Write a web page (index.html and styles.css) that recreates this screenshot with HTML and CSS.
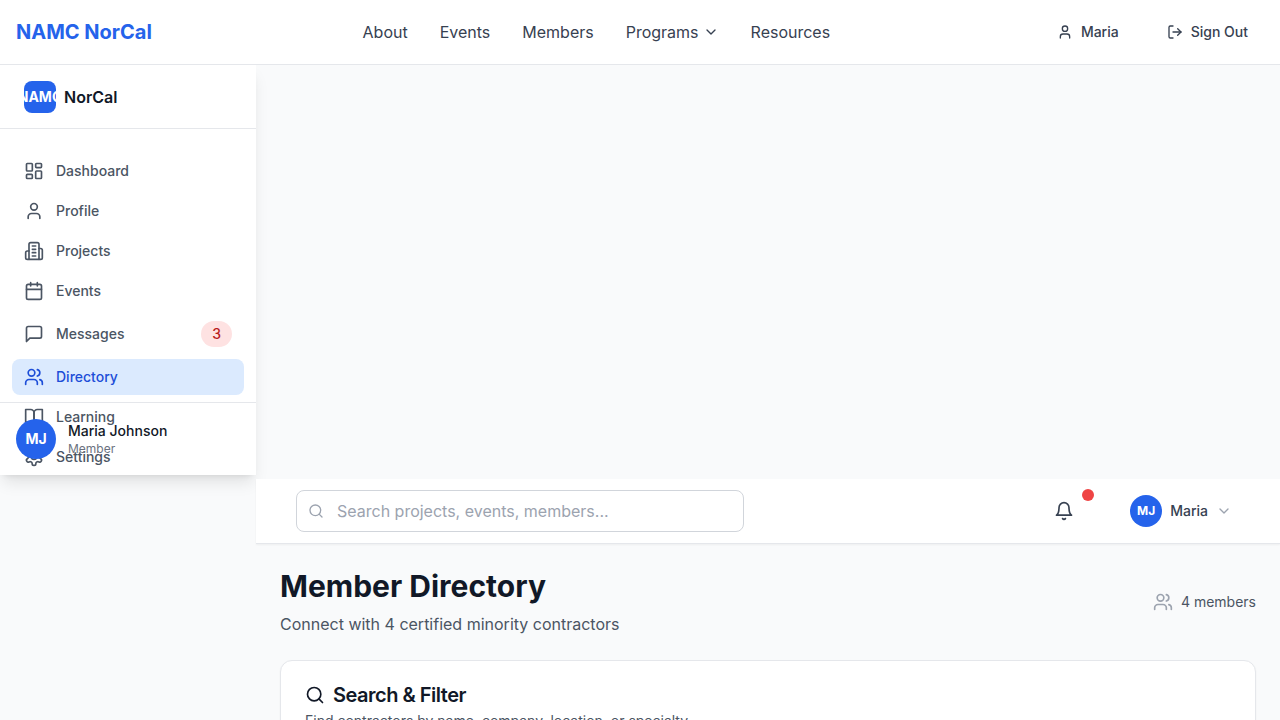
FILE: index.html
```html
<!DOCTYPE html>
<html lang="en">
<head>
<meta charset="utf-8">
<title>Member Directory</title>
<link rel="stylesheet" href="styles.css">
</head>
<body>
<svg class="sprite" xmlns="http://www.w3.org/2000/svg">
  <symbol id="user" viewBox="0 0 24 24"><path d="M19 21v-2a4 4 0 0 0-4-4H9a4 4 0 0 0-4 4v2"/><circle cx="12" cy="7" r="4"/></symbol>
  <symbol id="users" viewBox="0 0 24 24"><path d="M16 21v-2a4 4 0 0 0-4-4H6a4 4 0 0 0-4 4v2"/><circle cx="9" cy="7" r="4"/><path d="M22 21v-2a4 4 0 0 0-3-3.87"/><path d="M16 3.13a4 4 0 0 1 0 7.75"/></symbol>
  <symbol id="chevron" viewBox="0 0 24 24"><path d="m6 9 6 6 6-6"/></symbol>
  <symbol id="search" viewBox="0 0 24 24"><circle cx="11" cy="11" r="8"/><path d="m21 21-4.3-4.3"/></symbol>
</svg>
<header class="site-header">
  <a class="brand">NAMC NorCal</a>
  <nav class="site-nav">
    <a>About</a><a>Events</a><a>Members</a>
    <a class="with-menu">Programs <svg class="icon icon-sm"><use href="#chevron"/></svg></a>
    <a>Resources</a>
  </nav>
  <div class="account">
    <a class="account-link"><svg class="icon icon-sm"><use href="#user"/></svg>Maria</a>
    <a class="account-link"><svg class="icon icon-sm" viewBox="0 0 24 24"><path d="M9 21H5a2 2 0 0 1-2-2V5a2 2 0 0 1 2-2h4"/><path d="m16 17 5-5-5-5"/><path d="M21 12H9"/></svg>Sign Out</a>
  </div>
</header>
<aside class="sidebar">
  <div class="side-head"><span class="logo">NAMC</span><span class="logo-name">NorCal</span></div>
  <nav class="side-nav">
    <a class="side-link"><svg class="icon" viewBox="0 0 24 24"><rect width="7" height="9" x="3" y="3" rx="1"/><rect width="7" height="5" x="14" y="3" rx="1"/><rect width="7" height="9" x="14" y="12" rx="1"/><rect width="7" height="5" x="3" y="16" rx="1"/></svg>Dashboard</a>
    <a class="side-link"><svg class="icon"><use href="#user"/></svg>Profile</a>
    <a class="side-link"><svg class="icon" viewBox="0 0 24 24"><path d="M6 22V4a2 2 0 0 1 2-2h8a2 2 0 0 1 2 2v18Z"/><path d="M6 12H4a2 2 0 0 0-2 2v6a2 2 0 0 0 2 2h2"/><path d="M18 9h2a2 2 0 0 1 2 2v9a2 2 0 0 1-2 2h-2"/><path d="M10 6h4M10 10h4M10 14h4M10 18h4"/></svg>Projects</a>
    <a class="side-link"><svg class="icon" viewBox="0 0 24 24"><path d="M8 2v4M16 2v4"/><rect width="18" height="18" x="3" y="4" rx="2"/><path d="M3 10h18"/></svg>Events</a>
    <a class="side-link"><svg class="icon" viewBox="0 0 24 24"><path d="M21 15a2 2 0 0 1-2 2H7l-4 4V5a2 2 0 0 1 2-2h14a2 2 0 0 1 2 2z"/></svg>Messages<span class="count">3</span></a>
    <a class="side-link active"><svg class="icon"><use href="#users"/></svg>Directory</a>
    <a class="side-link"><svg class="icon" viewBox="0 0 24 24"><path d="M2 3h6a4 4 0 0 1 4 4v14a3 3 0 0 0-3-3H2z"/><path d="M22 3h-6a4 4 0 0 0-4 4v14a3 3 0 0 1 3-3h7z"/></svg>Learning</a>
    <a class="side-link"><svg class="icon" viewBox="0 0 24 24"><path d="M12.22 2h-.44a2 2 0 0 0-2 2v.18a2 2 0 0 1-1 1.73l-.43.25a2 2 0 0 1-2 0l-.15-.08a2 2 0 0 0-2.73.73l-.22.38a2 2 0 0 0 .73 2.73l.15.1a2 2 0 0 1 1 1.72v.51a2 2 0 0 1-1 1.74l-.15.09a2 2 0 0 0-.73 2.73l.22.38a2 2 0 0 0 2.73.73l.15-.08a2 2 0 0 1 2 0l.43.25a2 2 0 0 1 1 1.73V20a2 2 0 0 0 2 2h.44a2 2 0 0 0 2-2v-.18a2 2 0 0 1 1-1.73l.43-.25a2 2 0 0 1 2 0l.15.08a2 2 0 0 0 2.73-.73l.22-.39a2 2 0 0 0-.73-2.73l-.15-.08a2 2 0 0 1-1-1.74v-.5a2 2 0 0 1 1-1.74l.15-.09a2 2 0 0 0 .73-2.73l-.22-.38a2 2 0 0 0-2.73-.73l-.15.08a2 2 0 0 1-2 0l-.43-.25a2 2 0 0 1-1-1.73V4a2 2 0 0 0-2-2z"/><circle cx="12" cy="12" r="3"/></svg>Settings</a>
  </nav>
  <div class="side-user">
    <span class="avatar avatar-lg">MJ</span>
    <div><div class="user-name">Maria Johnson</div><div class="user-role">Member</div></div>
  </div>
</aside>
<div class="content">
  <div class="topbar">
    <div class="search-box"><svg class="icon icon-sm"><use href="#search"/></svg><span>Search projects, events, members...</span></div>
    <div class="tools">
      <div class="bell"><svg class="icon" viewBox="0 0 24 24"><path d="M6 8a6 6 0 0 1 12 0c0 7 3 9 3 9H3s3-2 3-9"/><path d="M10.3 21a1.94 1.94 0 0 0 3.4 0"/></svg><span class="dot"></span></div>
      <div class="profile"><span class="avatar">MJ</span><span>Maria</span><svg class="icon icon-sm muted"><use href="#chevron"/></svg></div>
    </div>
  </div>
  <main class="page">
    <div class="page-head">
      <div><h1 class="title">Member Directory</h1><p class="subtitle">Connect with 4 certified minority contractors</p></div>
      <div class="total"><svg class="icon muted"><use href="#users"/></svg>4 members</div>
    </div>
    <section class="card">
      <h2 class="card-title"><svg class="icon"><use href="#search"/></svg>Search &amp; Filter</h2>
      <p class="card-text">Find contractors by name, company, location, or specialty</p>
    </section>
  </main>
</div>
</body>
</html>
```
FILE: styles.css
```css
* { box-sizing: border-box; }
body {
  margin: 0;
  height: 720px;
  overflow: hidden;
  background: #f9fafb;
  color: #111827;
  font: 16px/24px Inter, "Liberation Sans", sans-serif;
}
h1, h2, p { margin: 0; }
.sprite { position: absolute; width: 0; height: 0; }
.icon {
  width: 20px;
  height: 20px;
  flex: none;
  fill: none;
  stroke: currentColor;
  stroke-width: 2;
  stroke-linecap: round;
  stroke-linejoin: round;
}
.icon-sm { width: 16px; height: 16px; }
.muted { color: #9ca3af; }
.site-header {
  display: flex;
  align-items: center;
  justify-content: space-between;
  height: 65px;
  padding: 0 16px;
  background: #fff;
  border-bottom: 1px solid #e5e7eb;
}
.brand { color: #2563eb; font-size: 20px; line-height: 28px; font-weight: 700; }
.site-nav { display: flex; gap: 32px; color: #374151; }
.with-menu { display: flex; align-items: center; gap: 4px; }
.account { display: flex; gap: 16px; }
.account-link {
  display: flex;
  align-items: center;
  gap: 8px;
  padding: 8px 16px;
  color: #374151;
  font-size: 14px;
  line-height: 20px;
  font-weight: 500;
}
.sidebar {
  position: relative;
  width: 256px;
  height: 410px;
  background: #fff;
  box-shadow: 0 10px 15px -3px rgb(0 0 0 / .1), 0 4px 6px -4px rgb(0 0 0 / .1);
  clip-path: inset(0 -20px -30px 0);
}
.side-head {
  display: flex;
  align-items: center;
  gap: 8px;
  height: 64px;
  padding: 0 24px;
  border-bottom: 1px solid #e5e7eb;
}
.logo {
  display: flex;
  align-items: center;
  justify-content: center;
  width: 32px;
  height: 32px;
  border-radius: 8px;
  overflow: hidden;
  background: #2563eb;
  color: #fff;
  font-size: 14px;
  font-weight: 700;
}
.logo-name { font-weight: 600; }
.side-nav { display: flex; flex-direction: column; gap: 4px; padding: 24px 12px 0; }
.side-link {
  display: flex;
  align-items: center;
  gap: 12px;
  padding: 8px 12px;
  border-radius: 8px;
  color: #4b5563;
  font-size: 14px;
  line-height: 20px;
  font-weight: 500;
}
.active { background: #dbeafe; color: #1d4ed8; }
.count {
  margin-left: auto;
  padding: 3px 11px;
  border-radius: 13px;
  background: #fee2e2;
  color: #b91c1c;
}
.side-user {
  position: absolute;
  bottom: 0;
  left: 0;
  right: 0;
  display: flex;
  align-items: center;
  gap: 12px;
  padding: 16px;
  border-top: 1px solid #e5e7eb;
}
.avatar {
  display: flex;
  align-items: center;
  justify-content: center;
  width: 32px;
  height: 32px;
  border-radius: 50%;
  background: #2563eb;
  color: #fff;
  font-size: 12px;
  font-weight: 700;
}
.avatar-lg { width: 40px; height: 40px; font-size: 14px; }
.user-name { font-size: 14px; line-height: 20px; font-weight: 500; }
.user-role { color: #6b7280; font-size: 12px; line-height: 16px; }
.content { margin: 4px 0 0 256px; }
.topbar {
  position: relative;
  display: flex;
  align-items: center;
  justify-content: space-between;
  height: 65px;
  padding: 0 40px;
  background: #fff;
  border-bottom: 1px solid #e5e7eb;
  box-shadow: 0 1px 2px rgb(0 0 0 / .05);
}
.search-box {
  display: flex;
  align-items: center;
  gap: 13px;
  width: 448px;
  height: 42px;
  padding: 0 11px;
  border: 1px solid #d1d5db;
  border-radius: 8px;
  color: #9ca3af;
}
.tools { display: flex; align-items: center; gap: 40px; }
.bell { position: relative; display: flex; padding: 10px 16px; color: #374151; }
.dot {
  position: absolute;
  top: -2px;
  right: -4px;
  width: 12px;
  height: 12px;
  border-radius: 50%;
  background: #ef4444;
}
.profile {
  display: flex;
  align-items: center;
  gap: 8px;
  padding-right: 8px;
  color: #374151;
  font-size: 14px;
  font-weight: 500;
}
.page { padding: 24px; }
.page-head { display: flex; align-items: center; justify-content: space-between; }
.title { font-size: 30px; line-height: 36px; font-weight: 700; }
.subtitle { margin-top: 8px; color: #4b5563; }
.total { display: flex; align-items: center; gap: 8px; color: #4b5563; font-size: 14px; line-height: 20px; }
.card {
  height: 300px;
  margin-top: 24px;
  padding: 24px;
  background: #fff;
  border: 1px solid #e5e7eb;
  border-radius: 12px;
  box-shadow: 0 1px 2px rgb(0 0 0 / .05);
}
.card-title {
  display: flex;
  align-items: center;
  gap: 8px;
  font-size: 20px;
  line-height: 20px;
  font-weight: 600;
  letter-spacing: -.5px;
}
.card-text { margin-top: 6px; color: #4b5563; font-size: 14px; line-height: 20px; }
```
